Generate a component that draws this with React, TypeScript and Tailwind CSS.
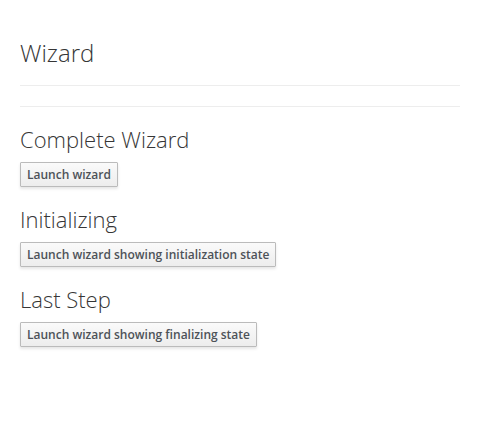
import React from 'react'

const sections = [
  { title: 'Complete Wizard', label: 'Launch wizard' },
  { title: 'Initializing', label: 'Launch wizard showing initialization state' },
  { title: 'Last Step', label: 'Launch wizard showing finalizing state' },
]

function LaunchButton({ label }: { label: string }) {
  return (
    <button
      type="button"
      className="flex h-[25px] items-center rounded-[1px] border border-[#bbbbbb] bg-gradient-to-b from-[#fafafa] to-[#ededed] px-[6px] text-[12px] font-semibold leading-[18px] text-[#4d5258] shadow-[0_2px_3px_rgba(3,3,3,0.1)]"
    >
      {label}
    </button>
  )
}

export default function App() {
  return (
    <div
      className="min-h-[447px] bg-white px-5 text-[#363636]"
      style={{ fontFamily: '"Open Sans", "Liberation Sans", sans-serif' }}
    >
      <h1 className="pt-[39px] text-[24px] font-light leading-[27px]">Wizard</h1>
      <div className="mt-[19px] border-t border-[#ededed]" />
      <div className="mt-5 border-t border-[#ededed]" />

      <div className="flex flex-col gap-5 pt-5">
        {sections.map((s) => (
          <section key={s.title} className="flex flex-col items-start gap-[11px]">
            <h2 className="text-[22px] font-light leading-[24px]">{s.title}</h2>
            <LaunchButton label={s.label} />
          </section>
        ))}
      </div>
    </div>
  )
}
